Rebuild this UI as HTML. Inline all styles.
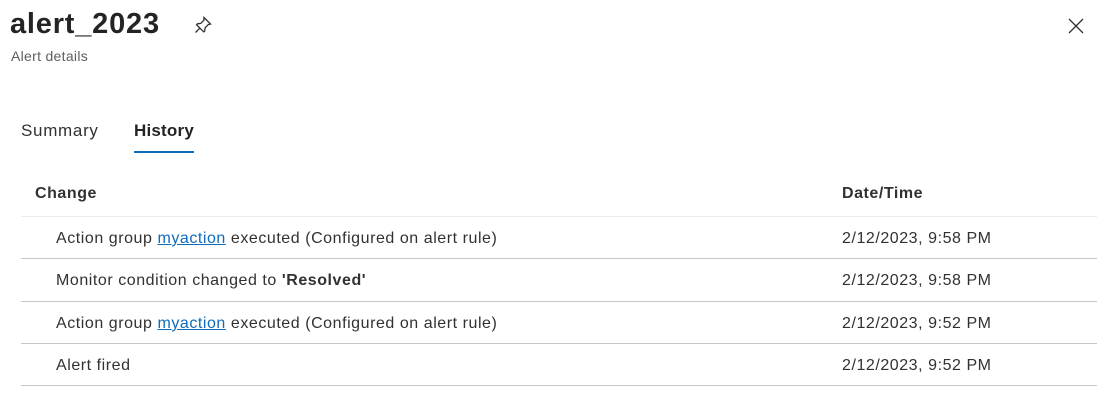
<!DOCTYPE html>
<html><head><style>
body{margin:0;width:1104px;height:414px;background:#fff;font-family:"Liberation Sans",sans-serif;color:#323130;position:relative;overflow:hidden}
.a{position:absolute;white-space:nowrap}
.line{position:absolute;left:21px;width:1076px;height:1px;background:#c8c6c4}
a{color:#0f6cbd;text-decoration:underline}
.r{font-size:16px;line-height:20px;letter-spacing:0.55px}
</style></head><body>
<div class="a" style="left:10px;top:5px;font-size:29px;font-weight:bold;line-height:38px;color:#252423;letter-spacing:0.8px">alert_2023</div>
<svg class="a" style="left:193px;top:15px" width="20" height="20" viewBox="0 0 20 20" fill="none" stroke="#323130" stroke-width="1.3"><path d="M11 2.5l6.5 6.5-2.2.6-3.2 3.2-.4 3.2-1 .9L3.6 9.8l.9-1 3.2-.4 3.2-3.2z M6.8 13.2L2.5 17.5"/></svg>
<svg class="a" style="left:1066px;top:16px" width="20" height="20" viewBox="0 0 20 20" stroke="#323130" stroke-width="1.3"><path d="M3 3l14 14M17 3L3 17"/></svg>
<div class="a" style="left:11px;top:48px;font-size:14px;color:#605e5c;letter-spacing:0.3px">Alert details</div>
<div class="a" style="left:21px;top:120px;font-size:17px;line-height:22px;letter-spacing:0.7px">Summary</div>
<div class="a" style="left:134px;top:120px;font-size:17px;line-height:22px;font-weight:bold;color:#252423;letter-spacing:0.2px">History</div>
<div class="a" style="left:134px;top:151px;width:60px;height:2px;background:#0f6cbd"></div>
<div class="a r" style="left:35px;top:184px;font-weight:bold">Change</div>
<div class="a r" style="left:842px;top:184px;font-weight:bold">Date/Time</div>
<div class="line" style="top:216px;background:#edebe9"></div>
<div class="a r" style="left:56px;top:229px">Action group <a>myaction</a> executed (Configured on alert rule)</div>
<div class="a r" style="left:842px;top:229px">2/12/2023, 9:58 PM</div>
<div class="line" style="top:258px"></div>
<div class="a r" style="left:56px;top:271px">Monitor condition changed to <b>'Resolved'</b></div>
<div class="a r" style="left:842px;top:271px">2/12/2023, 9:58 PM</div>
<div class="line" style="top:301px"></div>
<div class="a r" style="left:56px;top:314px">Action group <a>myaction</a> executed (Configured on alert rule)</div>
<div class="a r" style="left:842px;top:314px">2/12/2023, 9:52 PM</div>
<div class="line" style="top:343px"></div>
<div class="a r" style="left:56px;top:356px">Alert fired</div>
<div class="a r" style="left:842px;top:356px">2/12/2023, 9:52 PM</div>
<div class="line" style="top:385px"></div>
</body></html>
